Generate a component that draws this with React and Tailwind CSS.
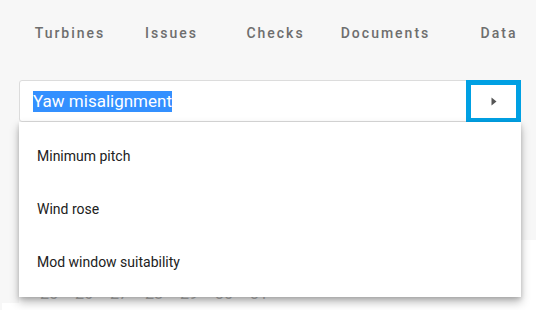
import { useState } from "react";

const tabs = [
  { label: "Turbines", w: "w-[102px]" },
  { label: "Issues", w: "w-[101px]" },
  { label: "Checks", w: "w-[107px]" },
  { label: "Documents", w: "w-[113px]" },
  { label: "Data", w: "w-[114px]" },
];

const options = ["Minimum pitch", "Wind rose", "Mod window suitability"];
const days = [25, 26, 27, 28, 29, 30, 31];

export default function App() {
  const [open] = useState(true);

  return (
    <div className="relative w-[536px] h-[310px] overflow-hidden bg-[#f7f7f7] font-['Roboto',sans-serif]">
      {/* Tabs */}
      <nav className="flex pl-[19px] h-[66px] items-center">
        {tabs.map((t) => (
          <div key={t.label} className={`${t.w} shrink-0 text-center text-[14px] font-medium tracking-[2px] text-[#6e6e6e]`}>
            {t.label}
          </div>
        ))}
      </nav>

      {/* Select box */}
      <div className="relative ml-[19px] w-[502px] mt-[14px] h-[42px] flex items-center bg-white border border-[#dcdcdc] rounded-[3px]">
        <span className="ml-[13px] text-[17px] leading-[21px] bg-[#3390ff] text-white">Yaw misalignment</span>
        <button className="absolute right-[-1px] top-[-1px] w-[55px] h-[43px] border-[5px] border-[#00a0e3] bg-white flex items-center justify-center">
          <svg width="6" height="9" viewBox="0 0 6 9"><path d="M0.5 0.5 L5.5 4.5 L0.5 8.5 Z" fill="#555" /></svg>
        </button>
      </div>

      {/* Content behind dropdown */}
      <div className="mt-[118px] flex h-[63px]">
        <div className="w-[285px] flex flex-col justify-end">
          <div className="ml-[19px] w-[266px] flex bg-white pl-[21px] h-[24px] items-end">
            {days.map((d) => (
              <span key={d} className="w-[36px] text-[16px] text-[#bbb] leading-[16px] pb-[1px]">{d}</span>
            ))}
          </div>
        </div>
        <div className="flex-1 bg-white" />
      </div>
      <div className="ml-[2px] h-[10px] bg-white" />

      {/* Dropdown */}
      {open && (
        <ul className="absolute left-[19px] top-[122px] w-[502px] bg-white py-[8px] shadow-[0_5px_9px_rgba(0,0,0,0.28),0_2px_4px_rgba(0,0,0,0.14)]">
          {options.map((o) => (
            <li key={o} className="h-[53px] flex items-center pl-[18px] text-[14px] text-[#212121]">{o}</li>
          ))}
        </ul>
      )}
    </div>
  );
}
